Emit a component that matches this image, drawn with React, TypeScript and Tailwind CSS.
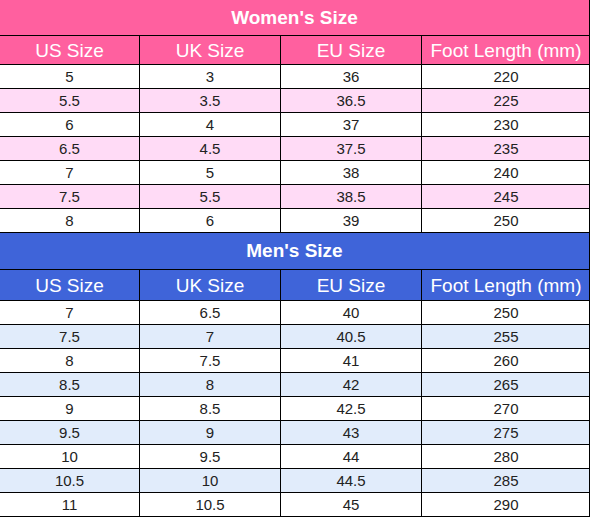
import React from 'react';

type Section = {
  title: string;
  head: string;
  stripe: string;
  titleH: string;
  headH: string;
  rows: string[][];
};

const columns = ['US Size', 'UK Size', 'EU Size', 'Foot Length (mm)'];

const sections: Section[] = [
  {
    title: "Women's Size",
    head: 'bg-[#ff609f]',
    stripe: 'bg-[#ffdbf6]',
    titleH: 'h-[36px]',
    headH: 'h-[29px]',
    rows: [
      ['5', '3', '36', '220'],
      ['5.5', '3.5', '36.5', '225'],
      ['6', '4', '37', '230'],
      ['6.5', '4.5', '37.5', '235'],
      ['7', '5', '38', '240'],
      ['7.5', '5.5', '38.5', '245'],
      ['8', '6', '39', '250'],
    ],
  },
  {
    title: "Men's Size",
    head: 'bg-[#3f64d9]',
    stripe: 'bg-[#e1ecfb]',
    titleH: 'h-[37px]',
    headH: 'h-[31px]',
    rows: [
      ['7', '6.5', '40', '250'],
      ['7.5', '7', '40.5', '255'],
      ['8', '7.5', '41', '260'],
      ['8.5', '8', '42', '265'],
      ['9', '8.5', '42.5', '270'],
      ['9.5', '9', '43', '275'],
      ['10', '9.5', '44', '280'],
      ['10.5', '10', '44.5', '285'],
      ['11', '10.5', '45', '290'],
    ],
  },
];

const grid = 'grid grid-cols-[140px_141px_141px_168px]';

export default function App() {
  return (
    <div className="w-[593px] h-[517px] bg-white overflow-hidden font-['Liberation_Sans',Arial,sans-serif]">
      <div className="w-[590px] border-r border-black">
        {sections.map((s) => (
          <div key={s.title}>
            <div className={`${s.head} ${s.titleH} pt-[1px] border-b border-black flex items-center justify-center text-white font-bold text-[19px]`}>
              {s.title}
            </div>
            <div className={`${grid} ${s.head}`}>
              {columns.map((c, i) => (
                <div
                  key={c}
                  className={`${s.headH} pt-[2px] border-b border-black flex items-center justify-center text-white text-[19px] ${i < 3 ? 'border-r' : ''}`}
                >
                  {c}
                </div>
              ))}
            </div>
            {s.rows.map((r, ri) => (
              <div key={ri} className={`${grid} ${ri % 2 === 1 ? s.stripe : 'bg-white'}`}>
                {r.map((v, i) => (
                  <div
                    key={i}
                    className={`h-[24px] pt-[2px] border-b border-black flex items-center justify-center text-[#222] text-[15px] ${i < 3 ? 'border-r' : ''}`}
                  >
                    {v}
                  </div>
                ))}
              </div>
            ))}
          </div>
        ))}
      </div>
    </div>
  );
}
